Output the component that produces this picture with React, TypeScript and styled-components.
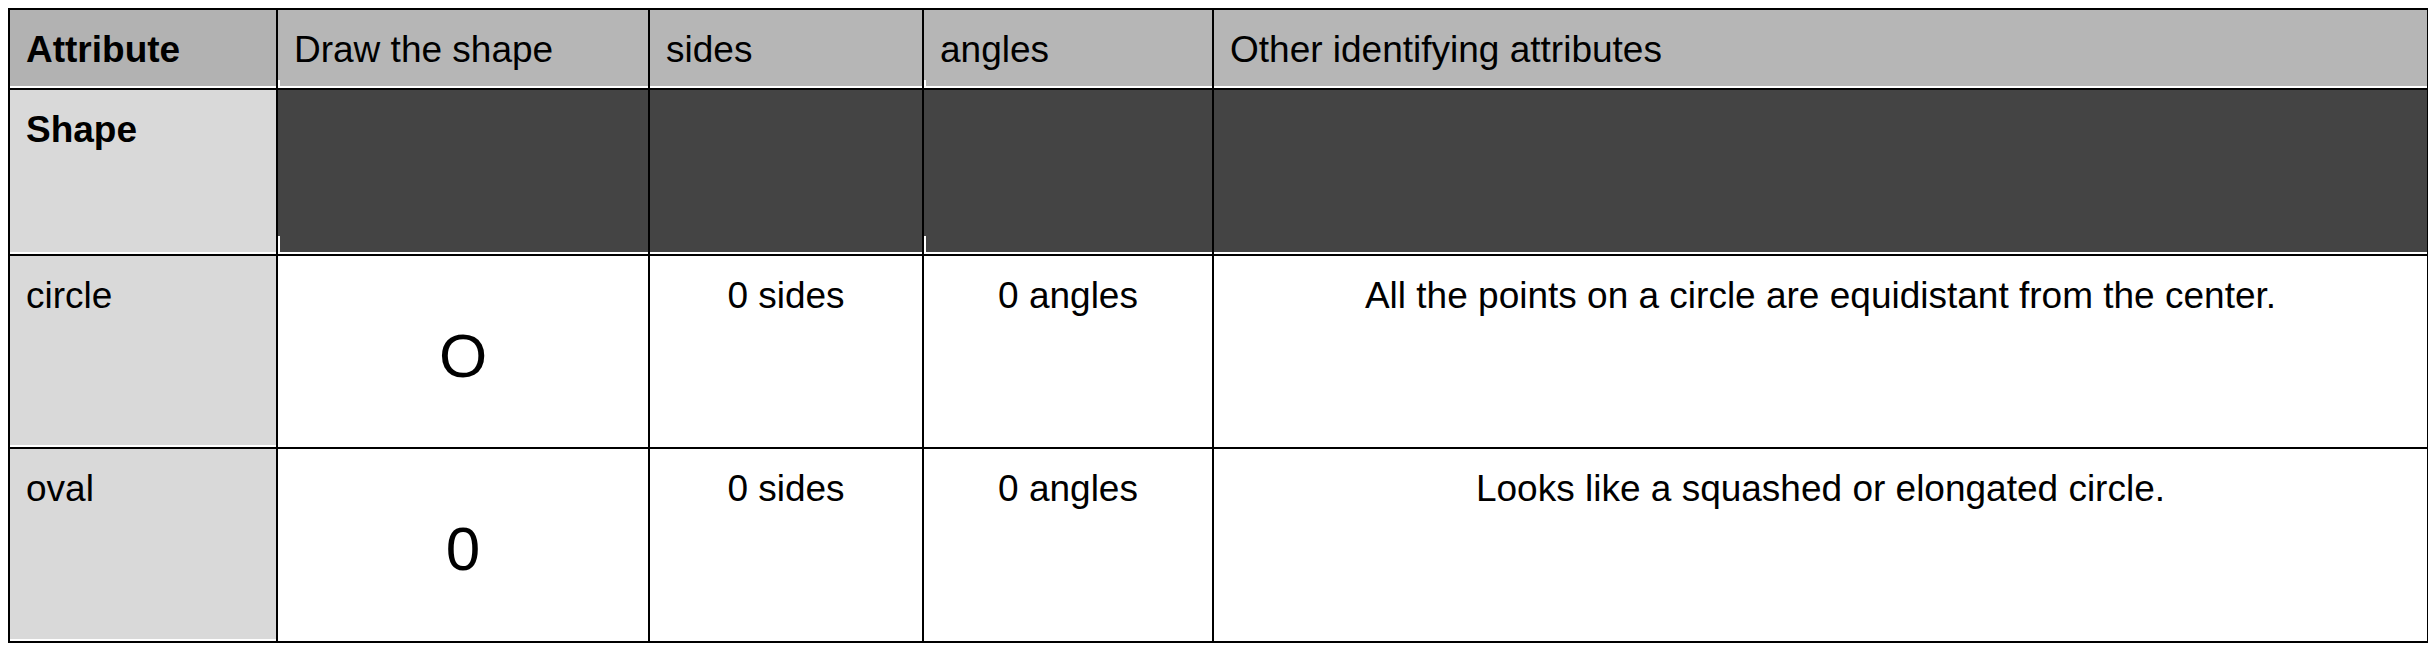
import React from 'react';
import styled, { createGlobalStyle, css } from 'styled-components';

const GlobalStyle = createGlobalStyle`
  body {
    margin: 8px;
    background: #ffffff;
    font-family: "Liberation Sans", Arial, Helvetica, sans-serif;
    color: #000000;
  }
`;

const Grid = styled.div`
  display: grid;
  grid-template-columns: 266px 370px 272px 288px 1213px;
  grid-template-rows: 78px 164px 191px 192px;
  gap: 2px;
  padding: 2px;
  width: 2421px;
  box-sizing: border-box;
  background: #000000;
`;

type Tone = 'corner' | 'head' | 'side' | 'dark' | 'plain';

const tones: Record<Tone, string> = {
  corner: '#b2b2b2',
  head: '#b6b6b6',
  side: '#d9d9d9',
  dark: '#444444',
  plain: '#ffffff',
};

const Cell = styled.div<{ $tone: Tone; $bold?: boolean; $center?: boolean; $sliver?: 'short' | 'long' }>`
  position: relative;
  background: ${p => tones[p.$tone]};
  box-shadow: inset 0 -2px 0 #ffffff;
  padding: 19px 16px 0;
  font-size: 37px;
  line-height: 42px;
  font-weight: ${p => (p.$bold ? 700 : 400)};
  text-align: ${p => (p.$center ? 'center' : 'left')};
  white-space: nowrap;

  ${p =>
    p.$sliver &&
    css`
      &::after {
        content: '';
        position: absolute;
        left: 0;
        bottom: 2px;
        width: 2px;
        height: ${p.$sliver === 'short' ? '6px' : '16px'};
        background: #ffffff;
      }
    `}
`;

const Drawing = styled.div`
  margin-top: 45px;
  font-size: 62px;
  line-height: 71px;
  text-align: center;
`;

const rows = [
  {
    name: 'circle',
    glyph: 'O',
    sides: '0 sides',
    angles: '0 angles',
    note: 'All the points on a circle are equidistant from the center.',
  },
  {
    name: 'oval',
    glyph: '0',
    sides: '0 sides',
    angles: '0 angles',
    note: 'Looks like a squashed or elongated circle.',
  },
];

const App: React.FC = () => {
  return (
    <>
      <GlobalStyle />
      <Grid>
        <Cell $tone="corner" $bold>Attribute</Cell>
        <Cell $tone="head" $sliver="short">Draw the shape</Cell>
        <Cell $tone="head">sides</Cell>
        <Cell $tone="head" $sliver="short">angles</Cell>
        <Cell $tone="head">Other identifying attributes</Cell>

        <Cell $tone="side" $bold>Shape</Cell>
        <Cell $tone="dark" $sliver="long" />
        <Cell $tone="dark" />
        <Cell $tone="dark" $sliver="long" />
        <Cell $tone="dark" />

        {rows.map(row => (
          <React.Fragment key={row.name}>
            <Cell $tone="side">{row.name}</Cell>
            <Cell $tone="plain">
              <Drawing>{row.glyph}</Drawing>
            </Cell>
            <Cell $tone="plain" $center>{row.sides}</Cell>
            <Cell $tone="plain" $center>{row.angles}</Cell>
            <Cell $tone="plain" $center>{row.note}</Cell>
          </React.Fragment>
        ))}
      </Grid>
    </>
  );
};

export default App;
